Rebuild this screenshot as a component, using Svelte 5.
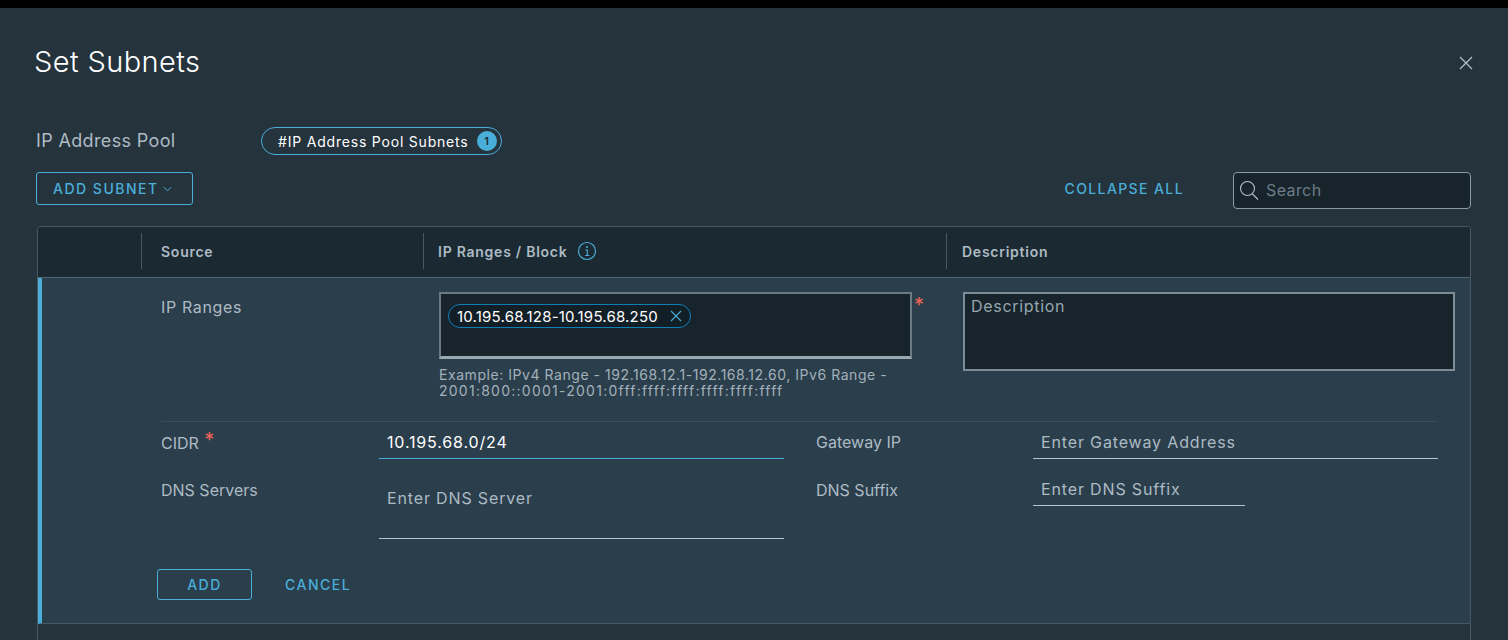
<script lang="ts">
const columns = [
  { name: 'Source', width: 282 },
  { name: 'IP Ranges / Block', width: 523, info: true },
  { name: 'Description', width: 0 }
]
</script>

<div class="topbar"></div>
<div class="modal">
  <header class="title-row">
    <h1>Set Subnets</h1>
    <svg class="close" viewBox="0 0 14 14" width="14" height="14">
      <path d="M1 1 13 13M13 1 1 13" stroke="#b3c2cc" stroke-width="1.2" fill="none" />
    </svg>
  </header>

  <div class="pool-row">
    <span class="pool-label">IP Address Pool</span>
    <span class="pool-pill">
      #IP Address Pool Subnets
      <span class="badge">1</span>
    </span>
  </div>

  <div class="toolbar">
    <button class="btn add-subnet">
      ADD SUBNET
      <svg viewBox="0 0 10 6" width="9" height="6">
        <path d="M1 1 5 5 9 1" stroke="#49afd9" stroke-width="1.1" fill="none" />
      </svg>
    </button>
    <span class="collapse">COLLAPSE ALL</span>
    <div class="search">
      <svg viewBox="0 0 20 20" width="20" height="20">
        <circle cx="8.5" cy="8.5" r="7" stroke="#b3c2cc" stroke-width="1.1" fill="none" />
        <path d="M13.5 14 19 19.5" stroke="#b3c2cc" stroke-width="1.1" fill="none" />
      </svg>
      <span>Search</span>
    </div>
  </div>

  <div class="table">
    <div class="thead">
      <div class="th-spacer"></div>
      {#each columns as col}
        <div class="th" class:grow={!col.width} style:width={col.width ? col.width + 'px' : null}>
          {col.name}
          {#if col.info}
            <svg viewBox="0 0 20 20" width="20" height="20">
              <circle cx="10" cy="10" r="8.5" stroke="#49afd9" stroke-width="1.1" fill="none" />
              <circle cx="10" cy="6" r="1" fill="#49afd9" />
              <path d="M8.3 9H10.3V14.5M8 14.5H12.5" stroke="#49afd9" stroke-width="1.1" fill="none" />
            </svg>
          {/if}
        </div>
      {/each}
    </div>

    <div class="row">
      <div class="top-grid">
        <span class="label ip-label">IP Ranges</span>
        <div class="ranges">
          <div class="ranges-line">
            <div class="ranges-box">
              <span class="chip">
                10.195.68.128-10.195.68.250
                <svg viewBox="0 0 12 12" width="12" height="12">
                  <path d="M1 1 11 11M11 1 1 11" stroke="#49afd9" stroke-width="1.1" fill="none" />
                </svg>
              </span>
            </div>
            <span class="req big">*</span>
          </div>
          <p class="hint">Example: IPv4 Range - 192.168.12.1-192.168.12.60, IPv6 Range -<br /><span class="hint-hex">2001:800::0001-2001:0fff:ffff:ffff:ffff:ffff:ffff</span></p>
        </div>
        <div class="desc">Description</div>
      </div>

      <div class="form-grid">
        <span class="label">CIDR <span class="req cidr-req">*</span></span>
        <div class="input active"><span class="value">10.195.68.0/24</span></div>
        <span class="label side">Gateway IP</span>
        <div class="input">Enter Gateway Address</div>

        <span class="label dns">DNS Servers</span>
        <div class="input tall">Enter DNS Server</div>
        <span class="label dns side">DNS Suffix</span>
        <div class="input short">Enter DNS Suffix</div>
      </div>

      <div class="actions">
        <button class="btn add">ADD</button>
        <span class="cancel">CANCEL</span>
      </div>
    </div>
    <div class="tfoot"></div>
  </div>
</div>

<style>
  :global(body) {
    margin: 0;
    background: #25333d;
    overflow: hidden;
  }

  .topbar {
    height: 8px;
    background: #000;
  }

  .modal {
    height: 632px;
    padding: 0 37px;
    box-sizing: border-box;
    font-family: Inter, "Open Sans", sans-serif;
    color: #adbbc4;
    background: #25333d;
  }

  .title-row {
    display: flex;
    justify-content: space-between;
    align-items: center;
    height: 108px;
  }

  h1 {
    margin: -2px 0 0 -3px;
    font-size: 29px;
    font-weight: 300;
    color: #fff;
    letter-spacing: 0.4px;
  }

  .close {
    margin: 2px -2px 0 0;
  }

  .pool-row {
    display: flex;
    align-items: center;
    height: 28px;
    margin-top: 11px;
  }

  .pool-label {
    width: 225px;
    margin: -2px 0 0 -1px;
    font-size: 18px;
    font-weight: 400;
    letter-spacing: 0.35px;
  }

  .pool-pill {
    display: flex;
    align-items: center;
    gap: 8px;
    height: 28px;
    box-sizing: border-box;
    padding: 0 4px 0 16px;
    border: 1px solid #49afd9;
    border-radius: 14px;
    font-size: 14px;
    letter-spacing: 0.8px;
    color: #fff;
  }

  .badge {
    display: flex;
    align-items: center;
    justify-content: center;
    width: 20px;
    height: 20px;
    border-radius: 50%;
    background: #49afd9;
    color: #1b2a32;
    font-size: 11px;
    font-weight: 600;
    letter-spacing: 0;
  }

  .toolbar {
    display: flex;
    align-items: center;
    height: 37px;
    margin-top: 17px;
  }

  .btn {
    font-family: inherit;
    font-weight: 500;
    font-size: 14px;
    letter-spacing: 1.5px;
    color: #49afd9;
    background: transparent;
    border: 1px solid #49afd9;
    border-radius: 3px;
    cursor: pointer;
  }

  .add-subnet {
    display: flex;
    align-items: center;
    gap: 4px;
    height: 33px;
    width: 157px;
    padding: 0 0 0 16px;
    margin: -4px 0 0 -1px;
  }

  .collapse {
    margin: -4px 49px 0 auto;
    font-size: 14px;
    font-weight: 500;
    letter-spacing: 1.4px;
    color: #49afd9;
  }

  .search {
    display: flex;
    align-items: center;
    gap: 7px;
    width: 238px;
    height: 37px;
    box-sizing: border-box;
    padding: 0 0 2px 5px;
    background: #17242b;
    border: 1px solid #8a9ba6;
    border-radius: 4px;
    font-size: 16px;
    font-weight: 400;
    letter-spacing: 0.4px;
    color: #6c7d88;
  }

  .table {
    margin-top: 17px;
    border: 1px solid #485964;
    border-radius: 4px 4px 0 0;
    height: 420px;
  }

  .thead {
    display: flex;
    align-items: center;
    height: 51px;
    padding-bottom: 2px;
    background: #1b2a32;
    border-bottom: 1px solid #54666f;
    border-radius: 3px 3px 0 0;
    box-sizing: border-box;
    font-size: 14px;
    font-weight: 600;
    letter-spacing: 0.75px;
    color: #adbbc4;
  }

  .th-spacer {
    width: 103px;
  }

  .th {
    display: flex;
    align-items: center;
    gap: 10px;
    height: 36px;
    box-sizing: border-box;
    padding-left: 19px;
    border-left: 1px solid #485964;
  }

  .th:nth-child(3) {
    padding-left: 14px;
  }

  .th.grow {
    flex: 1;
    padding-left: 15px;
  }

  .row {
    box-sizing: border-box;
    height: 346px;
    padding: 14px 15px 0 119px;
    border-left: 4px solid #49afd9;
    border-bottom: 1px solid #485964;
    background: #2b3e4c;
  }

  .top-grid {
    display: grid;
    grid-template-columns: 278px 524px 1fr;
  }

  .label {
    font-size: 16px;
    font-weight: 400;
    color: #adbbc4;
  }

  .ip-label {
    padding-top: 5px;
    letter-spacing: 0.65px;
  }

  .ranges-line {
    display: flex;
  }

  .ranges-box {
    box-sizing: border-box;
    width: 473px;
    height: 67px;
    padding: 10px 7px;
    background: #17242b;
    border: 2px solid #6b7b85;
    border-bottom-color: #98a7b0;
    border-bottom-width: 3px;
  }

  .chip {
    display: inline-flex;
    align-items: center;
    gap: 12px;
    height: 24px;
    box-sizing: border-box;
    padding: 0 8px;
    border: 1px solid #0f7fb5;
    border-radius: 12px;
    font-size: 15px;
    letter-spacing: 0.2px;
    color: #fff;
    background: #131f27;
  }

  .req {
    color: #ee6459;
    font-size: 20px;
    line-height: 1;
  }

  .big {
    margin: 3px 0 0 2px;
    line-height: 20px;
  }

  .cidr-req {
    margin-left: 1px;
    position: relative;
    top: -2px;
  }

  .hint {
    margin: 8px 0 0;
    font-size: 14px;
    line-height: 16px;
    font-weight: 400;
    letter-spacing: 0.55px;
    color: #a3b1ba;
  }

  .hint-hex {
    letter-spacing: 1.25px;
  }

  .desc {
    box-sizing: border-box;
    height: 79px;
    padding: 2px 6px;
    background: #17242b;
    border: 2px solid #7c8d97;
    font-size: 16px;
    font-weight: 400;
    letter-spacing: 0.7px;
    color: #98a6af;
  }

  .form-grid {
    display: grid;
    grid-template-columns: 218px 405px 249px 405px;
    margin-top: 22px;
    padding-top: 10px;
    border-top: 1px solid #3a4d5a;
    width: 1277px;
    box-sizing: border-box;
  }

  .side {
    padding-left: 32px;
  }

  .input {
    box-sizing: border-box;
    height: 27px;
    padding: 0 8px;
    border-bottom: 1px solid #b6c4cc;
    font-size: 16px;
    font-weight: 400;
    letter-spacing: 0.85px;
    color: #adbbc4;
  }

  .input.active {
    border-bottom-color: #49afd9;
  }

  .value {
    color: #fff;
  }

  .input.tall {
    height: 69px;
    margin-top: 11px;
    padding-top: 18px;
  }

  .input.short {
    width: 212px;
    margin-top: 20px;
  }

  .dns {
    margin-top: 21px;
  }

  .actions {
    display: flex;
    align-items: center;
    gap: 33px;
    margin: 30px 0 0 -4px;
  }

  .add {
    width: 95px;
    height: 31px;
  }

  .cancel {
    font-size: 14px;
    font-weight: 500;
    letter-spacing: 1.5px;
    color: #49afd9;
  }
</style>
